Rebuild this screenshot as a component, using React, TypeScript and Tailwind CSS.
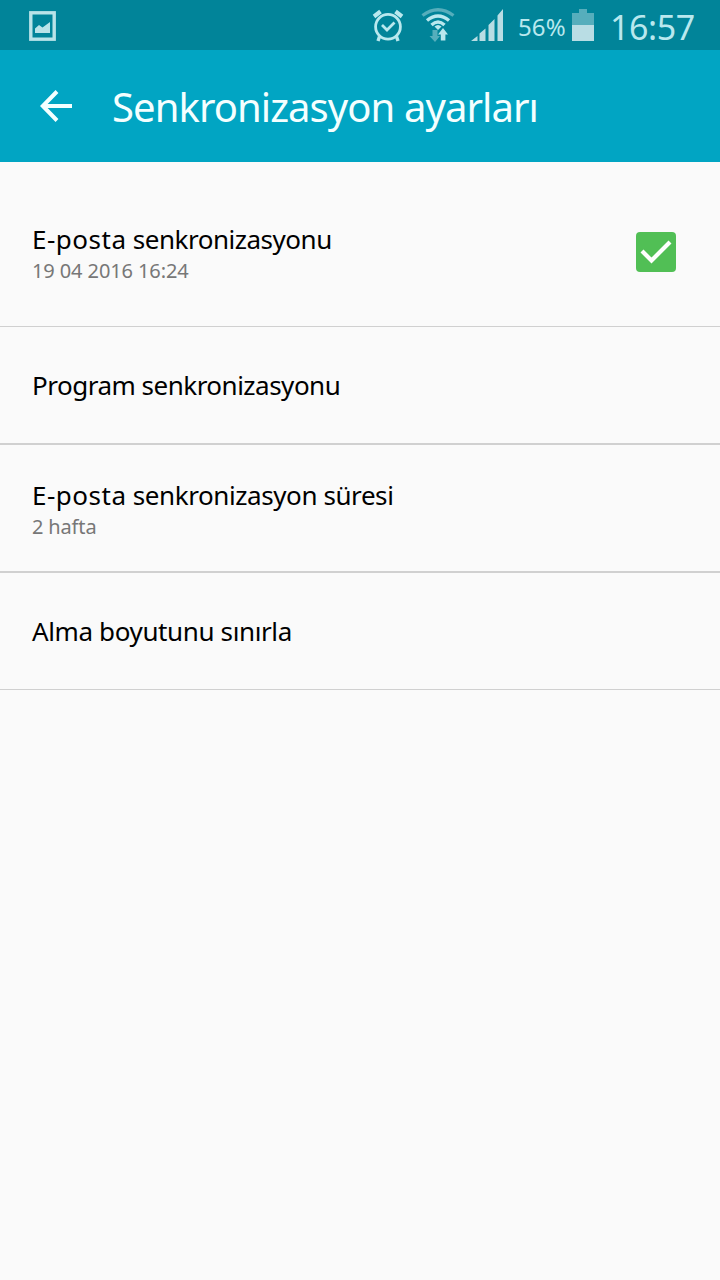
import { clsx } from "clsx";

const settings = [
  {
    lead: "E-posta",
    title: "senkronizasyonu",
    summary: "19 04 2016 16:24",
    checked: true,
    height: "h-[165px] border-b pt-4",
    leadStyle: "tracking-[0.5px]",
    titleStyle: "tracking-[-0.48px]",
    summaryStyle: "tracking-[-0.1px]",
  },
  {
    lead: "Program",
    title: "senkronizasyonu",
    height: "h-[118px] border-b-2",
    leadStyle: "tracking-[-0.5px]",
    titleStyle: "tracking-[-0.5px]",
  },
  {
    lead: "E-posta",
    title: "senkronizasyon süresi",
    summary: "2 hafta",
    height: "h-[128px] border-b-2",
    leadStyle: "tracking-[0.5px]",
    titleStyle: "tracking-[-0.42px]",
    summaryStyle: "tracking-[-0.15px]",
  },
  {
    lead: "Alma",
    title: "boyutunu sınırla",
    height: "h-[117px] border-b",
    leadStyle: "tracking-[-0.38px]",
    titleStyle: "tracking-[-0.38px]",
  },
];

function PictureIcon() {
  return (
    <svg className="h-[30px] w-7" viewBox="0 0 28 30" fill="none">
      <rect x="1.8" y="1.8" width="23.4" height="26.4" stroke="#b9e3e8" strokeWidth="3.4" />
      <path d="M6 22v-4.500l4-3.500 3.500 2.500 7.500-5.500v11z" fill="#b9e3e8" />
    </svg>
  );
}

function AlarmIcon() {
  return (
    <svg className="h-[34px] w-8" viewBox="0 0 32 34" fill="none" stroke="#b9e8ee" strokeWidth="2.8">
      <circle cx="16" cy="18.8" r="12.400" />
      <path d="M2 8.500 8.500 3.500M23.500 3.500 30 8.500" strokeWidth="4.200" strokeLinejoin="round" />
      <path d="M7.500 28.500 6 33M24.500 28.500 26 33" strokeWidth="3.400" />
      <path d="m10 17 5 5 7.500-7.500" />
    </svg>
  );
}

function WifiIcon() {
  return (
    <svg className="h-9 w-9" viewBox="0 0 36 36" fill="none" strokeWidth="3.4">
      <path d="M2.500 9.500Q18-2 33.500 9.500" stroke="#56aebc" />
      <path d="M7 14.500Q18 5.500 29 14.500" stroke="#b9e8ee" />
      <path d="M11.500 19Q18 13 24.500 19" stroke="#b9e8ee" />
      <path d="M14.500 20.500Q18 17.500 21.500 20.500L18 24z" fill="#b9e8ee" />
      <path d="M12.500 24v6H9.500l5.500 6 5-6h-2.500v-6z" fill="#56aebc" />
      <path d="M20.800 34.500V28.500H18l5-6.500 5 6.500h-2.600v6z" fill="#b9e8ee" />
    </svg>
  );
}

function SignalIcon() {
  return (
    <svg className="h-8 w-8" viewBox="0 0 32 32" fill="#b9dde4">
      <path d="M0 32 6.500 27v5zM8.500 24.500l6-5V32h-6zM17.500 16l6-6v22h-6zM26.500 6.500 32 0v32h-5.500z" />
    </svg>
  );
}

function BatteryIcon() {
  return (
    <svg className="h-8 w-[22px]" viewBox="0 0 22 32">
      <path d="M0 4h7V0h8v4h7v12H0z" fill="#56aebc" />
      <path d="M0 16h22v16H0z" fill="#b9dde4" />
    </svg>
  );
}

function StatusBar() {
  return (
    <header className="flex h-[50px] items-start bg-[#018499] text-[#b9e8ee]">
      <div className="ml-[29px] mt-[11px]">
        <PictureIcon />
      </div>
      <div className="ml-[315px] mt-[8px]">
        <AlarmIcon />
      </div>
      <div className="ml-4 mt-[6px]">
        <WifiIcon />
      </div>
      <div className="ml-[15px] mt-[9px]">
        <SignalIcon />
      </div>
      <span className="ml-[15px] mt-[9px] w-[54px] whitespace-nowrap text-[24px] leading-9 tracking-[0.1px]">56%</span>
      <div className="mt-[9px]">
        <BatteryIcon />
      </div>
      <span className="ml-4 mt-[5px] whitespace-nowrap text-[34px] leading-[44px] tracking-[-0.4px]">16:57</span>
    </header>
  );
}

function Checkbox() {
  return (
    <svg className="h-10 w-10" viewBox="0 0 40 40" fill="none" role="img">
      <rect width="40" height="40" rx="4" fill="#51bf55" />
      <path d="m6 19 9.500 9.500L34 10" stroke="#fff" strokeWidth="4.200" />
    </svg>
  );
}

export default function App() {
  return (
    <div className="min-h-screen w-full bg-[#fafafa] font-['Noto_Sans',sans-serif] text-black">
      <StatusBar />

      <div className="flex h-28 items-center bg-[#01a5c3] text-[#f4ffff]">
        <svg className="ml-10 h-8 w-8" viewBox="0 0 32 32" fill="none" stroke="currentColor" strokeWidth="4">
          <path d="M17 1.500 2.800 16 17 30.500M2.500 16H32" />
        </svg>
        <h1 className="ml-10 whitespace-nowrap pt-0.5 text-[40px] leading-[54px] tracking-[-0.92px]">
          Senkronizasyon ayarları
        </h1>
      </div>

      <ul>
        {settings.map((item) => (
          <li
            key={item.lead + item.title}
            className={clsx("flex items-center justify-between border-[#d0d0d0] pl-8 pr-11", item.height)}
          >
            <div className="flex flex-col">
              <span className={clsx("whitespace-nowrap text-[26px] leading-9", item.titleStyle)}>
                <span className={item.leadStyle}>{item.lead}</span> {item.title}
              </span>
              {item.summary && (
                <span
                  className={clsx("mt-px whitespace-nowrap text-[20px] leading-[26px] text-[#777]", item.summaryStyle)}
                >
                  {item.summary}
                </span>
              )}
            </div>
            {item.checked && <Checkbox />}
          </li>
        ))}
      </ul>
    </div>
  );
}
